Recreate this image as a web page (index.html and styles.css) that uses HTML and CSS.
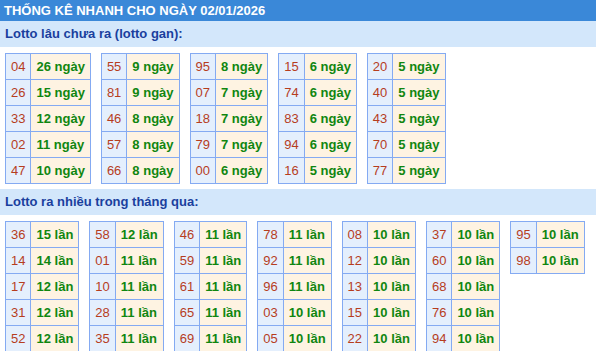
FILE: index.html
```html
<!DOCTYPE html>
<html lang="vi">
<head>
<meta charset="utf-8">
<link rel="stylesheet" href="styles.css">
</head>
<body>
<div class="title">THỐNG KÊ NHANH CHO NGÀY 02/01/2026</div>
<div class="sub">Lotto lâu chưa ra (lotto gan):</div>
<div class="tables">
  <table><tr><td class="n">04</td><td class="v">26 ngày</td></tr><tr><td class="n">26</td><td class="v">15 ngày</td></tr><tr><td class="n">33</td><td class="v">12 ngày</td></tr><tr><td class="n">02</td><td class="v">11 ngày</td></tr><tr><td class="n">47</td><td class="v">10 ngày</td></tr></table>
  <table><tr><td class="n">55</td><td class="v">9 ngày</td></tr><tr><td class="n">81</td><td class="v">9 ngày</td></tr><tr><td class="n">46</td><td class="v">8 ngày</td></tr><tr><td class="n">57</td><td class="v">8 ngày</td></tr><tr><td class="n">66</td><td class="v">8 ngày</td></tr></table>
  <table><tr><td class="n">95</td><td class="v">8 ngày</td></tr><tr><td class="n">07</td><td class="v">7 ngày</td></tr><tr><td class="n">18</td><td class="v">7 ngày</td></tr><tr><td class="n">79</td><td class="v">7 ngày</td></tr><tr><td class="n">00</td><td class="v">6 ngày</td></tr></table>
  <table><tr><td class="n">15</td><td class="v">6 ngày</td></tr><tr><td class="n">74</td><td class="v">6 ngày</td></tr><tr><td class="n">83</td><td class="v">6 ngày</td></tr><tr><td class="n">94</td><td class="v">6 ngày</td></tr><tr><td class="n">16</td><td class="v">5 ngày</td></tr></table>
  <table><tr><td class="n">20</td><td class="v">5 ngày</td></tr><tr><td class="n">40</td><td class="v">5 ngày</td></tr><tr><td class="n">43</td><td class="v">5 ngày</td></tr><tr><td class="n">70</td><td class="v">5 ngày</td></tr><tr><td class="n">77</td><td class="v">5 ngày</td></tr></table>
</div>
<div class="sub">Lotto ra nhiều trong tháng qua:</div>
<div class="tables">
  <table><tr><td class="n">36</td><td class="v">15 lần</td></tr><tr><td class="n">14</td><td class="v">14 lần</td></tr><tr><td class="n">17</td><td class="v">12 lần</td></tr><tr><td class="n">31</td><td class="v">12 lần</td></tr><tr><td class="n">52</td><td class="v">12 lần</td></tr></table>
  <table><tr><td class="n">58</td><td class="v">12 lần</td></tr><tr><td class="n">01</td><td class="v">11 lần</td></tr><tr><td class="n">10</td><td class="v">11 lần</td></tr><tr><td class="n">28</td><td class="v">11 lần</td></tr><tr><td class="n">35</td><td class="v">11 lần</td></tr></table>
  <table><tr><td class="n">46</td><td class="v">11 lần</td></tr><tr><td class="n">59</td><td class="v">11 lần</td></tr><tr><td class="n">61</td><td class="v">11 lần</td></tr><tr><td class="n">65</td><td class="v">11 lần</td></tr><tr><td class="n">69</td><td class="v">11 lần</td></tr></table>
  <table><tr><td class="n">78</td><td class="v">11 lần</td></tr><tr><td class="n">92</td><td class="v">11 lần</td></tr><tr><td class="n">96</td><td class="v">11 lần</td></tr><tr><td class="n">03</td><td class="v">10 lần</td></tr><tr><td class="n">05</td><td class="v">10 lần</td></tr></table>
  <table><tr><td class="n">08</td><td class="v">10 lần</td></tr><tr><td class="n">12</td><td class="v">10 lần</td></tr><tr><td class="n">13</td><td class="v">10 lần</td></tr><tr><td class="n">15</td><td class="v">10 lần</td></tr><tr><td class="n">22</td><td class="v">10 lần</td></tr></table>
  <table><tr><td class="n">37</td><td class="v">10 lần</td></tr><tr><td class="n">60</td><td class="v">10 lần</td></tr><tr><td class="n">68</td><td class="v">10 lần</td></tr><tr><td class="n">76</td><td class="v">10 lần</td></tr><tr><td class="n">94</td><td class="v">10 lần</td></tr></table>
  <table><tr><td class="n">95</td><td class="v">10 lần</td></tr><tr><td class="n">98</td><td class="v">10 lần</td></tr></table>
</div>
</body>
</html>
```
FILE: styles.css
```css
html, body {
  margin: 0;
  padding: 0;
  background: #ffffff;
  font-family: "Liberation Sans", Arial, sans-serif;
}
.title {
  height: 21px;
  line-height: 21px;
  background: #3a88d8;
  color: #ffffff;
  font-weight: bold;
  font-size: 13px;
  padding-left: 4px;
  white-space: nowrap;
}
.sub {
  height: 26px;
  line-height: 26px;
  background: #d3e7fb;
  color: #1a3f9e;
  font-weight: bold;
  font-size: 13px;
  padding-left: 5px;
}
.tables {
  display: flex;
  align-items: flex-start;
  gap: 10px;
  padding: 6px 5px 5px;
}
table {
  border-collapse: collapse;
  font-size: 13px;
}
td {
  border: 1px solid #84aaf2;
  height: 25px;
  line-height: 25px;
  padding: 0;
  white-space: nowrap;
}
td.n {
  background: #e4effd;
  color: #b63d1e;
  padding: 0 5px;
  text-align: center;
}
td.v {
  background: #fef3e2;
  color: #108610;
  font-weight: bold;
  padding: 0 5px;
}
```
